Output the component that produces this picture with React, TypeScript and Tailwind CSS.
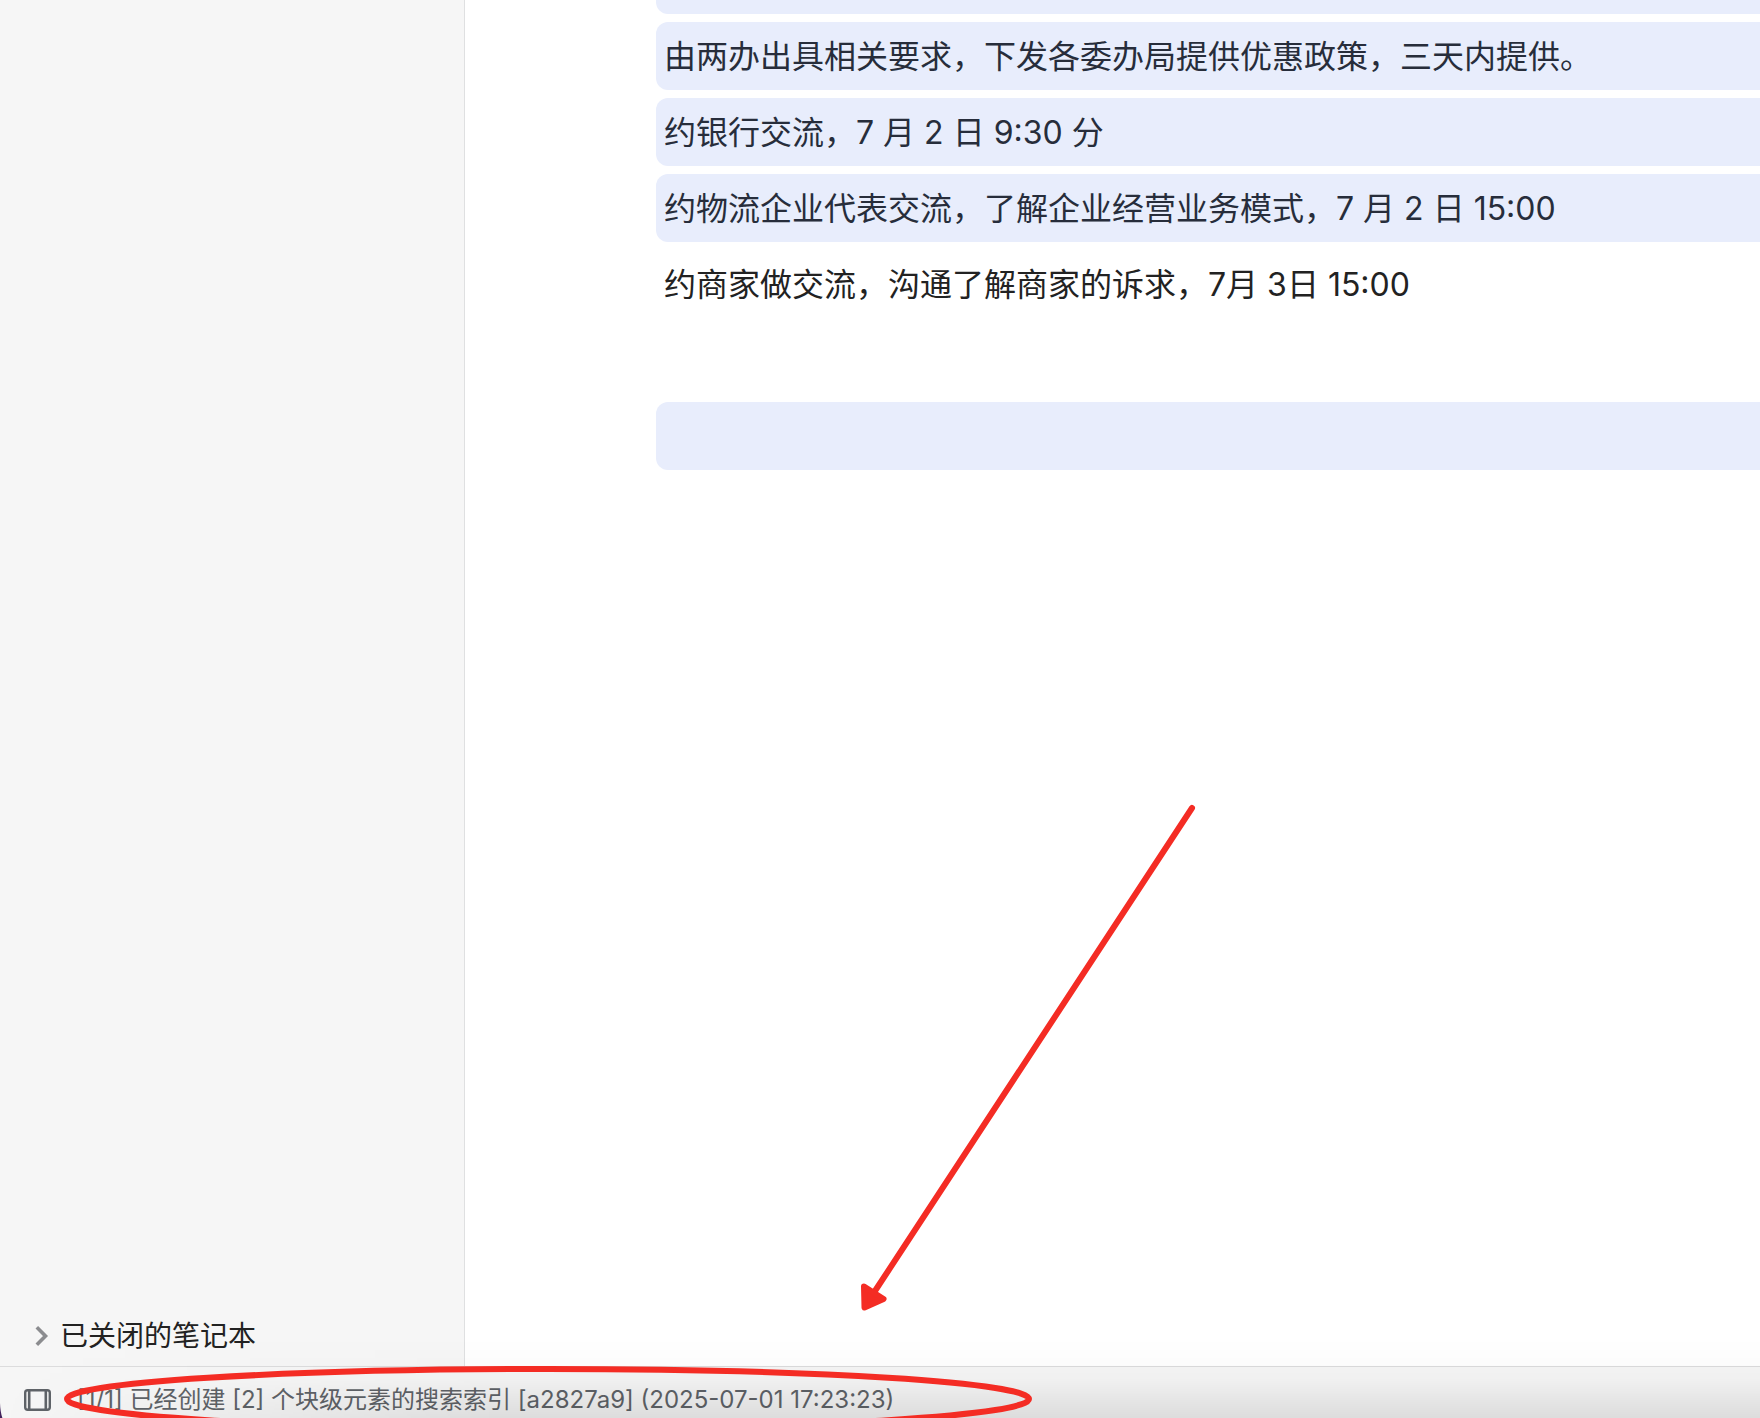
import { FC } from 'react';

interface Block {
  id: string;
  text: string;
  selected: boolean;
}

const blocks: Block[] = [
  { id: 'b1', text: '由两办出具相关要求，下发各委办局提供优惠政策，三天内提供。', selected: true },
  { id: 'b2', text: '约银行交流，7 月 2 日 9:30 分', selected: true },
  { id: 'b3', text: '约物流企业代表交流，了解企业经营业务模式，7 月 2 日 15:00', selected: true },
  { id: 'b4', text: '约商家做交流，沟通了解商家的诉求，7月 3日 15:00', selected: false },
  { id: 'b5', text: '', selected: false },
  { id: 'b6', text: '', selected: true },
];

const Sidebar: FC = () => (
  <aside className="flex w-[465px] shrink-0 flex-col justify-end border-r border-[#dfe0e1] bg-[#f6f6f6]">
    <button
      type="button"
      className="flex h-15 items-center gap-[7px] pl-[31px] text-left text-[28px] leading-[40px] text-[#222]"
    >
      <svg className="size-[22px] shrink-0" viewBox="0 0 22 22" fill="none" aria-hidden="true">
        <path d="M5.8 2.2 14.5 11 5.8 19.8" stroke="#8b8c8f" strokeWidth="3.6" />
      </svg>
      已关闭的笔记本
    </button>
  </aside>
);

const Editor: FC = () => (
  <main className="min-w-0 flex-1 overflow-hidden bg-white pl-[191px]">
    <div className="h-[14px] rounded-bl-xl bg-[#e8edfc]" />
    {blocks.map((block) => (
      <p
        key={block.id}
        className={
          block.selected
            ? 'mt-2 h-[68px] rounded-l-xl bg-[#e8edfc] px-2 pt-[13px] text-[32px] leading-[44px] whitespace-nowrap text-[#272d3b]'
            : 'mt-2 h-[68px] px-2 pt-[13px] text-[32px] leading-[44px] whitespace-nowrap text-[#222]'
        }
      >
        {block.text}
      </p>
    ))}
  </main>
);

const StatusBar: FC = () => (
  <footer className="flex h-[52px] shrink-0 items-center border-t border-[#dcdcdd] bg-[#f6f6f6] pt-3.5 pl-6 text-[#5f6368]">
    <button type="button" aria-label="停靠栏" className="shrink-0">
      <svg className="h-[22px] w-[27px]" viewBox="0 0 27 22" fill="none" stroke="#5f6368" aria-hidden="true">
        <rect x="1.2" y="1.2" width="24.6" height="19.6" rx="2.5" strokeWidth="2.4" />
        <path d="M5.2 2v18M21.8 2v18" strokeWidth="2.6" />
      </svg>
    </button>
    <span className="ml-[26px] text-[24px] leading-[32px] whitespace-nowrap">
      [1/1] 已经创建 [2] 个块级元素的搜索索引 [a2827a9] (2025-07-01 17:23:23)
    </span>
  </footer>
);

// hand-drawn marks lying over the window
const Annotation: FC = () => (
  <svg
    className="pointer-events-none absolute bottom-0 left-0 h-[640px] w-[1240px]"
    viewBox="0 0 1240 640"
    fill="none"
    stroke="#f42c24"
    strokeWidth="6"
    strokeLinecap="round"
    strokeLinejoin="round"
    aria-hidden="true"
  >
    <path d="M1192 30 873 516" />
    <path d="M864 508.5 883.5 521 864.5 529.5Z" fill="#f42c24" />
    <ellipse cx="548" cy="621" rx="481" ry="30" />
  </svg>
);

export default function App() {
  return (
    <div className="relative flex h-screen flex-col overflow-hidden bg-white font-['Inter','Noto_Sans_CJK_SC',sans-serif]">
      <div className="flex min-h-0 flex-1">
        <Sidebar />
        <Editor />
      </div>
      <StatusBar />
      <div className="pointer-events-none absolute bottom-0 left-0 h-20 w-full bg-linear-to-b from-transparent via-black/2 to-black/10 mask-[linear-gradient(to_right,transparent,black_500px)]" />
      {/* desktop showing past the rounded window corner */}
      <svg className="absolute bottom-0 left-0 h-4 w-1" viewBox="0 0 4 16" aria-hidden="true">
        <path d="M0 1Q.3 10 2.4 16H0Z" fill="#43235c" />
      </svg>
      <Annotation />
    </div>
  );
}
